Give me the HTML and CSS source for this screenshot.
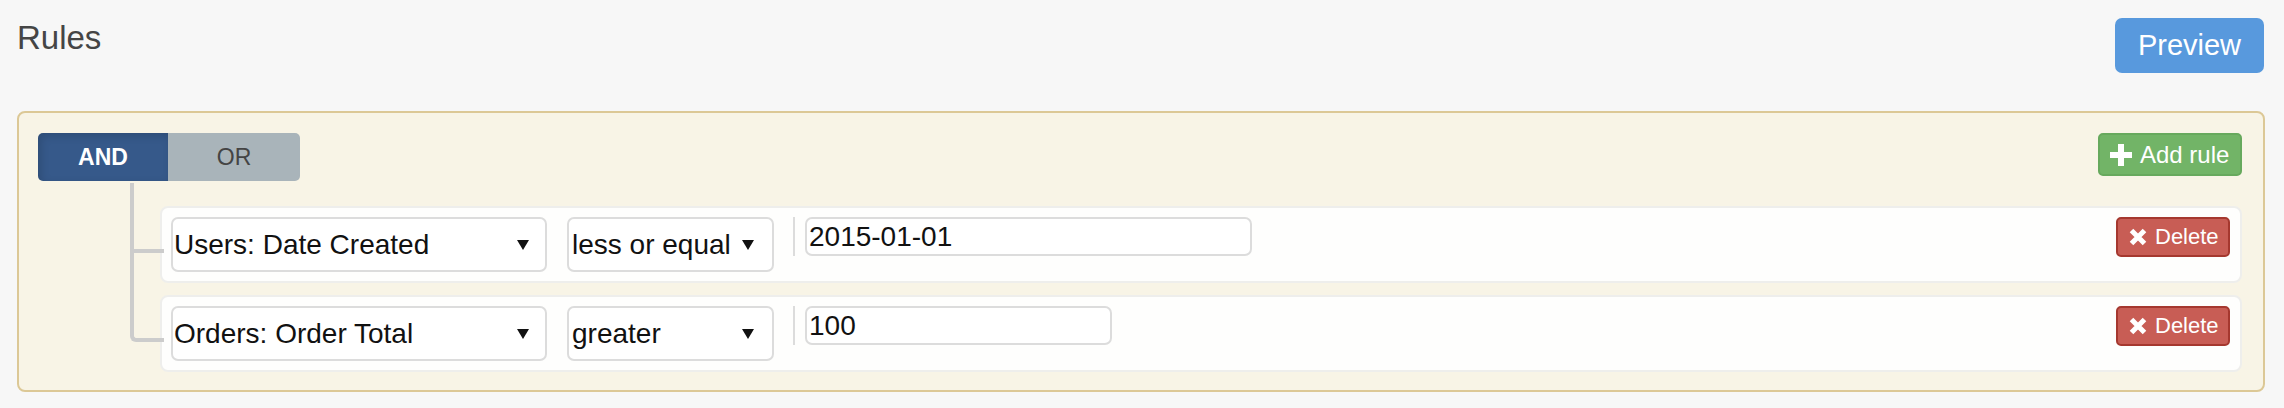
FILE: index.html
```html
<!DOCTYPE html>
<html lang="en">
<head>
<meta charset="utf-8">
<title>Rules</title>
<link rel="stylesheet" href="styles.css">
</head>
<body>
<div class="page">
  <div class="header">
    <h1 class="title">Rules</h1>
    <button class="btn btn-preview">Preview</button>
  </div>
  <div class="group">
    <div class="group-header">
      <div class="toggle">
        <span class="toggle-btn active">AND</span>
        <span class="toggle-btn or">OR</span>
      </div>
      <button class="btn btn-add">
        <svg class="icon-plus" width="22" height="22" viewBox="0 0 22 22"><path d="M8 0h6v8h8v6h-8v8h-6v-8h-8v-6h8z" fill="#fff"/></svg>
        <span>Add rule</span>
      </button>
    </div>
    <div class="rules-list">
      <div class="rule">
        <div class="select sel-filter"><span>Users: Date Created</span><svg class="caret" width="12" height="10" viewBox="0 0 12 10"><path d="M0 0h12L6 10z" fill="#111"/></svg></div>
        <div class="select sel-op"><span>less or equal</span><svg class="caret" width="12" height="10" viewBox="0 0 12 10"><path d="M0 0h12L6 10z" fill="#111"/></svg></div>
        <div class="value"><div class="input input-date">2015-01-01</div></div>
        <button class="btn btn-del">
          <svg width="18" height="18" viewBox="0 0 18 18"><path d="M2.5 2.5L15.5 15.5M15.5 2.5L2.5 15.5" stroke="#fff" stroke-width="5"/></svg>
          <span>Delete</span>
        </button>
      </div>
      <div class="rule">
        <div class="select sel-filter"><span>Orders: Order Total</span><svg class="caret" width="12" height="10" viewBox="0 0 12 10"><path d="M0 0h12L6 10z" fill="#111"/></svg></div>
        <div class="select sel-op"><span>greater</span><svg class="caret" width="12" height="10" viewBox="0 0 12 10"><path d="M0 0h12L6 10z" fill="#111"/></svg></div>
        <div class="value"><div class="input input-num">100</div></div>
        <button class="btn btn-del">
          <svg width="18" height="18" viewBox="0 0 18 18"><path d="M2.5 2.5L15.5 15.5M15.5 2.5L2.5 15.5" stroke="#fff" stroke-width="5"/></svg>
          <span>Delete</span>
        </button>
      </div>
    </div>
  </div>
</div>
</body>
</html>
```
FILE: styles.css
```css
* { box-sizing: border-box; }

body {
  margin: 0;
  background: #f7f7f7;
  font-family: "Liberation Sans", Arial, sans-serif;
}

.page {
  padding: 18px 19px 0 17px;
}

.header {
  display: flex;
  justify-content: space-between;
  align-items: flex-start;
  margin-bottom: 38px;
}

.title {
  margin: 4px 0 0;
  font-size: 33px;
  font-weight: normal;
  line-height: 32px;
  color: #454545;
}

.btn {
  font-family: "Liberation Sans", Arial, sans-serif;
  color: #fff;
  cursor: pointer;
  margin: 0;
}

.btn-preview {
  width: 149px;
  height: 55px;
  margin-right: 1px;
  padding: 0;
  background: #5899dd;
  border: none;
  border-radius: 7px;
  font-size: 29px;
}

.group {
  border: 2px solid #dcc896;
  border-radius: 8px;
  background: #f8f4e6;
  padding: 20px 21px 18px 19px;
}

.group-header {
  display: flex;
  justify-content: space-between;
  align-items: flex-start;
}

.toggle {
  display: flex;
  height: 48px;
  border-radius: 5px;
  overflow: hidden;
}

.toggle-btn {
  width: 130px;
  display: flex;
  align-items: center;
  justify-content: center;
  font-size: 23px;
  color: #444;
  background: #a9b4ba;
}

.toggle-btn.or {
  width: 132px;
}

.toggle-btn.active {
  background: #36598a;
  color: #fff;
  font-weight: bold;
  box-shadow: inset 3px 3px 8px rgba(0, 0, 0, 0.15);
}

.btn-add {
  width: 144px;
  height: 43px;
  display: flex;
  align-items: center;
  gap: 8px;
  padding: 0 0 0 10px;
  background: #72b467;
  border: 2px solid #67a95d;
  border-radius: 5px;
  font-size: 24px;
}

.icon-plus {
  margin-top: 1px;
}

.rules-list {
  margin: 25px 0 0 122px;
  display: flex;
  flex-direction: column;
  gap: 12px;
}

.rule {
  position: relative;
  display: flex;
  align-items: flex-start;
  gap: 20px;
  padding: 9px 10px 9px 9px;
  background: #fefefd;
  border: 2px solid #eeeeec;
  border-radius: 8px;
}

.rule::before {
  content: "";
  position: absolute;
  left: -32px;
  top: -52px;
  width: 30px;
  height: 93px;
  border-left: 4px solid #ccc;
  border-bottom: 4px solid #ccc;
}

.rule:first-child::before {
  top: -25px;
  height: 66px;
}

.rule:last-child::before {
  border-bottom-left-radius: 6px;
}

.select {
  height: 55px;
  display: flex;
  align-items: center;
  justify-content: space-between;
  padding: 0 16px 0 1px;
  background: #fff;
  border: 2px solid #dcdcdc;
  border-radius: 7px;
  font-size: 28px;
  color: #111;
}

.sel-filter {
  width: 376px;
}

.sel-op {
  width: 207px;
  padding-left: 3px;
  padding-right: 18px;
}

.value {
  border-left: 2px solid #dcdcdc;
  padding-left: 10px;
  margin-left: -1px;
}

.input {
  height: 39px;
  display: flex;
  align-items: center;
  padding: 0 0 0 2px;
  background: #fff;
  border: 2px solid #dcdcdc;
  border-radius: 7px;
  font-size: 28px;
  color: #111;
}

.input-date {
  width: 447px;
}

.input-num {
  width: 307px;
}

.btn-del {
  margin-left: auto;
  width: 114px;
  height: 40px;
  display: flex;
  align-items: center;
  gap: 8px;
  padding: 0 0 0 11px;
  background: #c85d55;
  border: 2px solid #a5382f;
  border-radius: 5px;
  font-size: 22px;
}
```
